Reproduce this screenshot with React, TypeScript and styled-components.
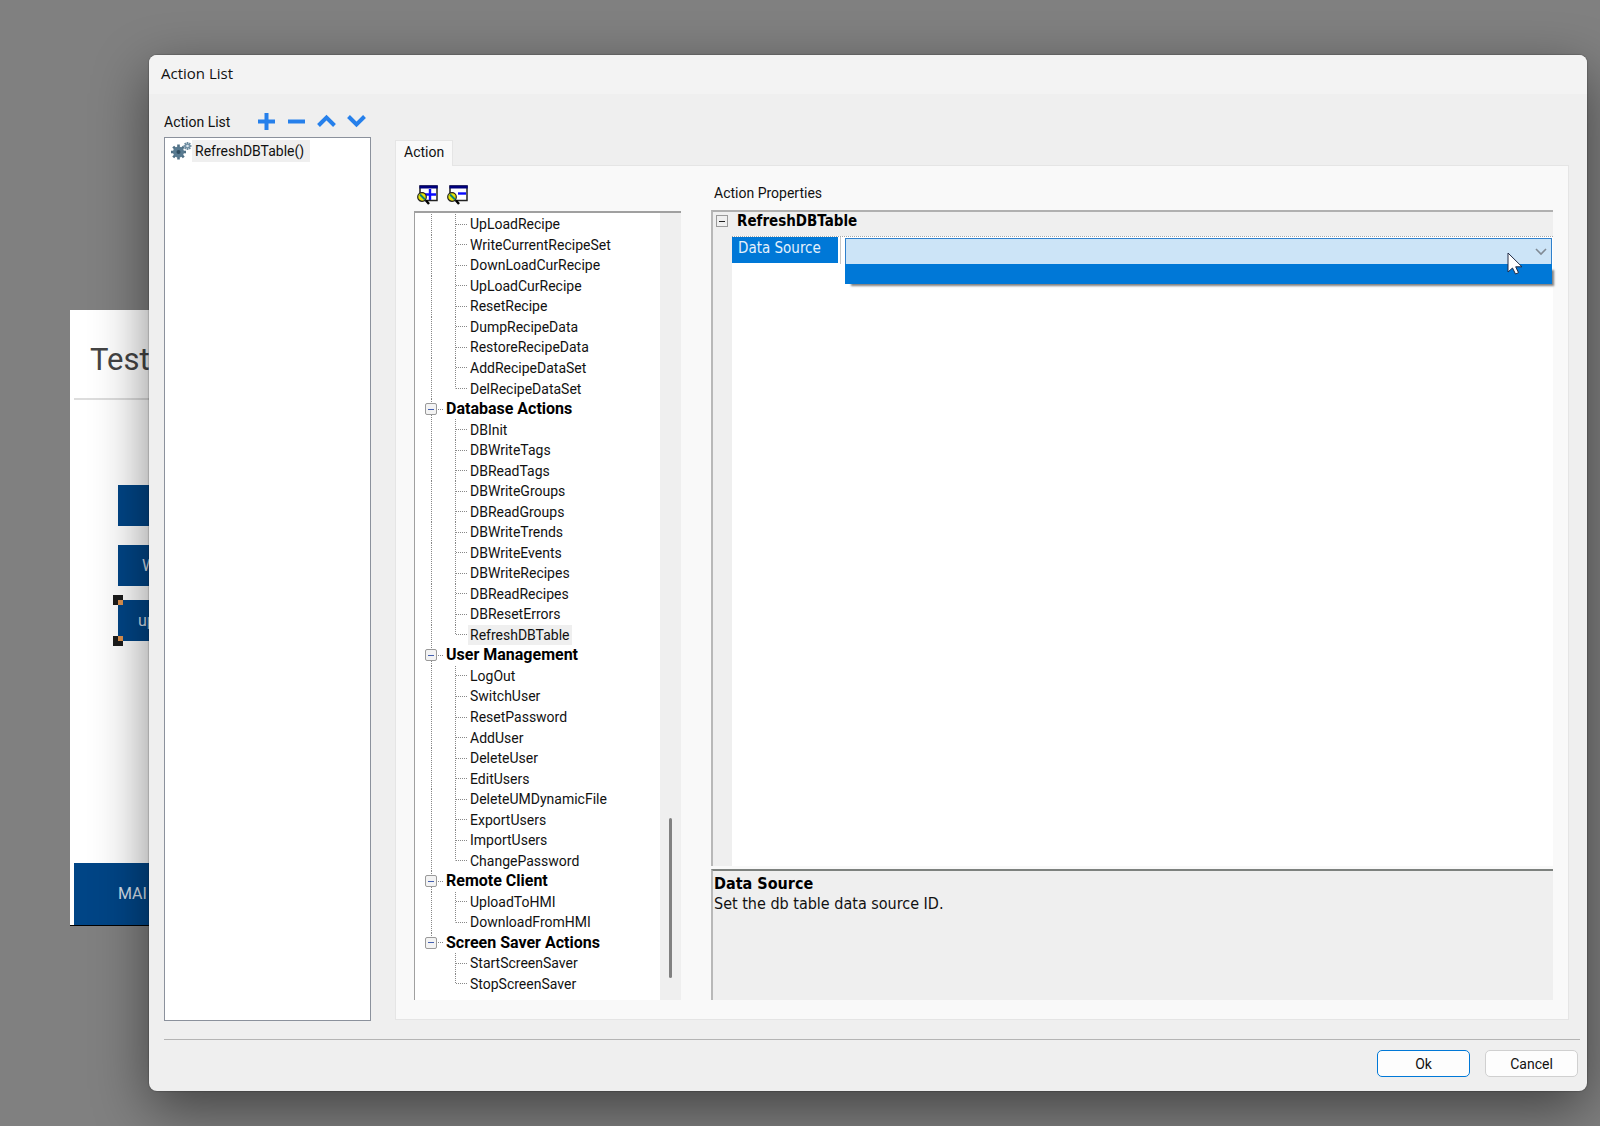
import React from "react";
import styled, { createGlobalStyle, css } from "styled-components";

const GlobalStyle = createGlobalStyle`
  * { box-sizing: border-box; }
  body { margin: 0; background: #808080; }
  button, select { font: inherit; color: inherit; }
`;

const uiFont = `Roboto, "Liberation Sans", sans-serif`;
const gridFont = `"DejaVu Sans Condensed", "DejaVu Sans", sans-serif`;

const Desktop = styled.div`
  position: relative;
  display: flex;
  min-height: 100vh;
  padding: 55px 13px 35px 149px;
  overflow: hidden;
  background: #808080;
  color: #111;
  font: 14px/20px ${uiFont};
`;

/* Panel preview behind the dialog */

const Preview = styled.section`
  position: absolute;
  left: 70px;
  top: 310px;
  width: 100px;
  height: 616px;
  display: flex;
  flex-direction: column;
  overflow: hidden;
  background: #fff;
  border-bottom: 1px solid #000;
`;

const PreviewTitle = styled.h1`
  margin: 0 0 0 4px;
  padding: 30px 0 0 16px;
  height: 90px;
  border-bottom: 2px solid #ddd;
  color: #444;
  font: 400 31px/40px Roboto, sans-serif;
`;

const PreviewButtons = styled.div`
  flex: 1;
  display: flex;
  flex-direction: column;
  padding: 85px 0 0 48px;
`;

const PreviewButton = styled.button<{ $gap: number; $indent: number }>`
  position: relative;
  height: 41px;
  margin: 0 0 ${(p) => p.$gap}px;
  padding: 0 0 0 ${(p) => p.$indent}px;
  border: 0;
  background: #004586;
  color: #d5dfe9;
  text-align: left;
  font: 16px/20px Roboto, sans-serif;
`;

const Handle = styled.span<{ $bottom?: boolean }>`
  position: absolute;
  left: -5px;
  ${(p) => (p.$bottom ? "bottom: -5px;" : "top: -5px;")}
  width: 10px;
  height: 10px;
  background: linear-gradient(#de9350, #de9350) right ${(p) => (p.$bottom ? "top" : "bottom")} / 5px 5px no-repeat #1c1c1c;
`;

const PreviewBar = styled.footer`
  height: 62px;
  margin-left: 4px;
  padding-left: 44px;
  background: #004586;
  color: #d5dfe9;
  font: 16px/62px Roboto, sans-serif;
`;

/* Dialog frame */

const Dialog = styled.section`
  position: relative;
  flex: 1;
  min-width: 0;
  display: flex;
  flex-direction: column;
  border-radius: 8px;
  background: #efefef;
  box-shadow: 0 0 1px 1px rgba(0, 0, 0, 0.15), 0 18px 56px rgba(0, 0, 0, 0.48);
`;

const TitleBar = styled.header`
  height: 39px;
  padding-left: 12px;
  border-radius: 8px 8px 0 0;
  background: #f3f3f3;
  font: 15px/36px "Open Sans", sans-serif;
`;

const Body = styled.div`
  flex: 1;
  display: flex;
  gap: 24px;
  padding: 0 18px 0 15px;
`;

const ListColumn = styled.div`
  width: 207px;
  display: flex;
  flex-direction: column;
`;

const ListToolbar = styled.div`
  display: flex;
  align-items: center;
  height: 43px;
  padding-top: 12px;
`;

const ListLabel = styled.span`
  width: 87px;
`;

const ToolButton = styled.button`
  display: flex;
  align-items: center;
  justify-content: center;
  width: 30px;
  height: 24px;
  padding: 0;
  border: 0;
  background: none;
`;

const ActionItems = styled.ul`
  flex: 1;
  margin: 0;
  padding: 2px 6px;
  border: 1px solid #8b919c;
  background: #fff;
  list-style: none;
`;

const ActionItem = styled.li`
  display: flex;
  align-items: center;
  height: 22px;
`;

const ActionItemText = styled.span`
  padding: 0 6px 0 3px;
  background: #efefef;
  line-height: 22px;
`;

const TabColumn = styled.div`
  flex: 1;
  min-width: 0;
  display: flex;
  flex-direction: column;
  padding: 46px 0 1px;
`;

const Tab = styled.button`
  align-self: flex-start;
  height: 26px;
  margin-bottom: -1px;
  padding: 0 8px 3px;
  border: 1px solid #e5e5e5;
  border-bottom: 0;
  background: #f9f9f9;
  z-index: 1;
`;

const TabPanel = styled.div`
  flex: 1;
  display: flex;
  gap: 30px;
  padding: 17px 15px 19px 18px;
  border: 1px solid #e5e5e5;
  background: #f9f9f9;
`;

/* Tree of available actions */

const TreeColumn = styled.div`
  width: 267px;
  display: flex;
  flex-direction: column;
`;

const TreeToolbar = styled.div`
  display: flex;
  gap: 8px;
  height: 28px;
  padding: 2px 0 0 3px;
`;

const TreeButton = styled.button`
  width: 22px;
  height: 20px;
  padding: 0;
  border: 0;
  background: none;
  svg { display: block; }
`;

const TreeFrame = styled.div`
  flex: 1;
  display: flex;
  border-top: 2px solid #a0a0a0;
  border-left: 1px solid #a0a0a0;
  background: #fff;
`;

const TreeList = styled.ul`
  flex: 1;
  display: flex;
  flex-direction: column;
  margin: 0;
  padding: 1px 0 6px 1px;
  list-style: none;
`;

const dotsV = "repeating-linear-gradient(#888 0 1px, transparent 1px 2px)";
const dotsH = "repeating-linear-gradient(90deg, #888 0 1px, transparent 1px 2px)";

const GroupRow = styled.li<{ $last: boolean }>`
  flex: 1;
  display: flex;
  align-items: center;
  padding-left: 9px;
  background:
    ${dotsV} 15px 0 / 1px ${(p) => (p.$last ? "50%" : "100%")} no-repeat,
    ${dotsH} 22px 50% / 5px 1px no-repeat;
  color: #000;
  font-weight: 700;
  font-size: 16px;
`;

const LeafRow = styled.li<{ $root: boolean; $last: boolean }>`
  flex: 1;
  display: flex;
  align-items: center;
  padding-left: 52px;
  background:
    ${dotsV} 15px 0 / 1px ${(p) => (p.$root ? "100%" : "0")} no-repeat,
    ${dotsV} 39px 0 / 1px ${(p) => (p.$last ? "50%" : "100%")} no-repeat,
    ${dotsH} 40px 50% / 11px 1px no-repeat;
`;

const LeafText = styled.span<{ $selected: boolean }>`
  padding: 0 2px;
  ${(p) => p.$selected && css`background: #efefef;`}
`;

const Toggle = styled.button<{ $flat?: boolean }>`
  display: flex;
  align-items: center;
  justify-content: center;
  width: 12px;
  height: 12px;
  margin-right: 9px;
  padding: 0;
  border: 1px solid #9a9a9a;
  border-radius: ${(p) => (p.$flat ? 0 : 2)}px;
  background: ${(p) => (p.$flat ? "#efefef" : "#f3f3f3")};
  &::before {
    content: "";
    width: 6px;
    height: 1px;
    background: ${(p) => (p.$flat ? "#222" : "#4460b0")};
  }
`;

const ScrollTrack = styled.div`
  display: flex;
  flex-direction: column;
  justify-content: flex-end;
  align-items: center;
  width: 21px;
  padding-bottom: 22px;
  background: #efefef;
`;

const ScrollThumb = styled.div`
  width: 3px;
  height: 160px;
  border-radius: 2px;
  background: #808080;
`;

/* Property grid */

const PropertyColumn = styled.div`
  flex: 1;
  min-width: 0;
  display: flex;
  flex-direction: column;
`;

const PropertyTitle = styled.div`
  height: 27px;
  padding-left: 3px;
`;

const PropertyGrid = styled.div`
  flex: 1;
  display: flex;
  flex-direction: column;
  border-top: 2px solid #b0b0b0;
  border-left: 2px solid #b8b8b8;
  background: linear-gradient(90deg, #efefef 19px, #fff 19px);
  font: 15px/20px ${gridFont};
`;

const Category = styled.div`
  display: flex;
  align-items: center;
  height: 24px;
  padding: 0 0 6px 3px;
  background: #efefef;
  color: #000;
  font-weight: 700;
`;

const PropertyRow = styled.div`
  display: flex;
  gap: 2px;
  height: 28px;
  margin-left: 19px;
  border-top: 1px dotted #a8a8a8;
`;

const PropertyName = styled.label`
  width: 106px;
  height: 26px;
  padding: 1px 6px;
  background: #0078d7;
  color: #e4f1fc;
`;

const PropertyValue = styled.div`
  position: relative;
  flex: 1;
  display: flex;
  padding: 1px 1px 0 4px;
  border-left: 1px solid #c8c8c8;
`;

const SourceSelect = styled.select`
  flex: 1;
  height: 27px;
  border: 1px solid #2f80cc;
  border-radius: 0;
  background: #cce4f7;
  appearance: none;
`;

const Chevron = styled.svg`
  position: absolute;
  right: 6px;
  top: 11px;
`;

const DropList = styled.div`
  position: absolute;
  left: 4px;
  right: 1px;
  top: 27px;
  height: 20px;
  background: #0078d7;
  box-shadow: 4px 4px 2px -2px rgba(0, 0, 0, 0.5);
`;

const Pointer = styled.svg`
  position: absolute;
  right: 30px;
  top: 15px;
`;

const Description = styled.div`
  height: 131px;
  margin-top: 3px;
  padding: 3px 0 0 1px;
  border-top: 2px solid #7d817e;
  border-left: 2px solid #b8b8b8;
  background: #efefef;
  font: 16px/20px ${gridFont};
  p, h2 { margin: 0; font: inherit; }
  h2 { color: #000; font-weight: 700; }
`;

/* Dialog buttons */

const Footer = styled.footer`
  display: flex;
  justify-content: flex-end;
  gap: 15px;
  margin: 18px 7px 0 15px;
  padding: 10px 2px 14px 0;
  border-top: 1px solid #b4b4b4;
`;

const DialogButton = styled.button<{ $primary?: boolean }>`
  width: 93px;
  height: 27px;
  padding: 0;
  border: ${(p) => (p.$primary ? "1px solid #0078d7" : "1px solid #d0d0d0")};
  border-radius: 5px;
  background: #fdfdfd;
`;

const groups: { name?: string; items: string[] }[] = [
  {
    items: [
      "UpLoadRecipe", "WriteCurrentRecipeSet", "DownLoadCurRecipe", "UpLoadCurRecipe", "ResetRecipe",
      "DumpRecipeData", "RestoreRecipeData", "AddRecipeDataSet", "DelRecipeDataSet",
    ],
  },
  {
    name: "Database Actions",
    items: [
      "DBInit", "DBWriteTags", "DBReadTags", "DBWriteGroups", "DBReadGroups", "DBWriteTrends",
      "DBWriteEvents", "DBWriteRecipes", "DBReadRecipes", "DBResetErrors", "RefreshDBTable",
    ],
  },
  {
    name: "User Management",
    items: [
      "LogOut", "SwitchUser", "ResetPassword", "AddUser", "DeleteUser", "EditUsers",
      "DeleteUMDynamicFile", "ExportUsers", "ImportUsers", "ChangePassword",
    ],
  },
  { name: "Remote Client", items: ["UploadToHMI", "DownloadFromHMI"] },
  { name: "Screen Saver Actions", items: ["StartScreenSaver", "StopScreenSaver"] },
];

const toolShapes = [
  { label: "Add action", d: "M9.5 1v17M1 9.5h17" },
  { label: "Remove action", d: "M1 9.5h17" },
  { label: "Move up", d: "M1.500 13.500l8-8 8 8" },
  { label: "Move down", d: "M1.500 4.500l8 8 8-8" },
];

function Gears() {
  const spokes = [0, 45, 90, 135];
  return (
    <svg width="21" height="18" viewBox="0 0 21 18">
      <g stroke="#4f6f84" strokeWidth="2.6">
        {spokes.map((a) => (
          <path key={a} d="M7.500 2.500v15" transform={`rotate(${a} 7.500 10)`} />
        ))}
      </g>
      <circle cx="7.500" cy="10" r="5.500" fill="#587a90" />
      <circle cx="7.500" cy="10" r="2" fill="#2f4d60" />
      <g stroke="#6d8ca0" strokeWidth="1.800">
        {spokes.map((a) => (
          <path key={a} d="M16.500 0v8" transform={`rotate(${a} 16.500 4)`} />
        ))}
      </g>
      <circle cx="16.500" cy="4" r="1.300" fill="#dbe6ee" />
    </svg>
  );
}

function WindowIcon({ plus }: { plus?: boolean }) {
  return (
    <svg width="22" height="20" viewBox="0 0 22 20">
      <path d="M3 1h17v14.500H3z" fill="#fff" stroke="#222" strokeWidth="1.500" />
      <path d="M2.500 0.500h18.200v3H2.500z" fill="#00007c" />
      <path d={plus ? "M8 9.500h11M13 4v11" : "M11 8.500h8"} stroke="#0a0aff" strokeWidth="2.400" />
      <circle cx="5" cy="12" r="4.300" fill="#e8e400" stroke="#222" strokeWidth="1.200" />
      <path d="M3 9.500l5 5" stroke="#0a8078" strokeWidth="2" />
      <path d="M9 15.500l3 3.500" stroke="#000" strokeWidth="2.400" />
    </svg>
  );
}

export default function App() {
  return (
    <>
      <GlobalStyle />
      <Desktop>
        <Preview>
          <PreviewTitle>Test</PreviewTitle>
          <PreviewButtons>
            <PreviewButton $gap={19} $indent={24} aria-label="Preview button" />
            <PreviewButton $gap={14} $indent={24}>W</PreviewButton>
            <PreviewButton $gap={0} $indent={20}>
              up
              <Handle />
              <Handle $bottom />
            </PreviewButton>
          </PreviewButtons>
          <PreviewBar>MAI</PreviewBar>
        </Preview>

        <Dialog role="dialog" aria-label="Action List">
          <TitleBar>Action List</TitleBar>
          <Body>
            <ListColumn>
              <ListToolbar>
                <ListLabel>Action List</ListLabel>
                {toolShapes.map((t) => (
                  <ToolButton key={t.label} aria-label={t.label}>
                    <svg width="19" height="19" viewBox="0 0 19 19" fill="none" stroke="#2680eb" strokeWidth="4">
                      <path d={t.d} />
                    </svg>
                  </ToolButton>
                ))}
              </ListToolbar>
              <ActionItems>
                <ActionItem>
                  <Gears />
                  <ActionItemText>RefreshDBTable()</ActionItemText>
                </ActionItem>
              </ActionItems>
            </ListColumn>

            <TabColumn>
              <Tab role="tab" aria-selected="true">Action</Tab>
              <TabPanel role="tabpanel">
                <TreeColumn>
                  <TreeToolbar>
                    <TreeButton aria-label="Expand all"><WindowIcon plus /></TreeButton>
                    <TreeButton aria-label="Collapse all"><WindowIcon /></TreeButton>
                  </TreeToolbar>
                  <TreeFrame>
                    <TreeList>
                      {groups.map((g, gi) => {
                        const lastGroup = gi === groups.length - 1;
                        return (
                          <React.Fragment key={gi}>
                            {g.name && (
                              <GroupRow $last={lastGroup}>
                                <Toggle aria-label={g.name} />
                                {g.name}
                              </GroupRow>
                            )}
                            {g.items.map((item, i) => (
                              <LeafRow key={item} $root={!lastGroup} $last={i === g.items.length - 1}>
                                <LeafText $selected={item === "RefreshDBTable"}>{item}</LeafText>
                              </LeafRow>
                            ))}
                          </React.Fragment>
                        );
                      })}
                    </TreeList>
                    <ScrollTrack><ScrollThumb /></ScrollTrack>
                  </TreeFrame>
                </TreeColumn>

                <PropertyColumn>
                  <PropertyTitle>Action Properties</PropertyTitle>
                  <PropertyGrid>
                    <Category>
                      <Toggle $flat aria-label="Collapse RefreshDBTable" />
                      RefreshDBTable
                    </Category>
                    <PropertyRow>
                      <PropertyName htmlFor="data-source">Data Source</PropertyName>
                      <PropertyValue>
                        <SourceSelect id="data-source"><option value="" /></SourceSelect>
                        <Chevron width="12" height="8" viewBox="0 0 12 8" fill="none" stroke="#808a94" strokeWidth="1.600">
                          <path d="M1 1l5 5 5-5" />
                        </Chevron>
                        <DropList />
                        <Pointer width="16" height="23" viewBox="0 0 16 23">
                          <path d="M1 1v19l4.500-4 3 6 3-1.300-2.800-5.900H15z" fill="#fff" stroke="#222b45" strokeWidth="1" />
                        </Pointer>
                      </PropertyValue>
                    </PropertyRow>
                  </PropertyGrid>
                  <Description>
                    <h2>Data Source</h2>
                    <p>Set the db table data source ID.</p>
                  </Description>
                </PropertyColumn>
              </TabPanel>
            </TabColumn>
          </Body>
          <Footer>
            <DialogButton $primary>Ok</DialogButton>
            <DialogButton>Cancel</DialogButton>
          </Footer>
        </Dialog>
      </Desktop>
    </>
  );
}
